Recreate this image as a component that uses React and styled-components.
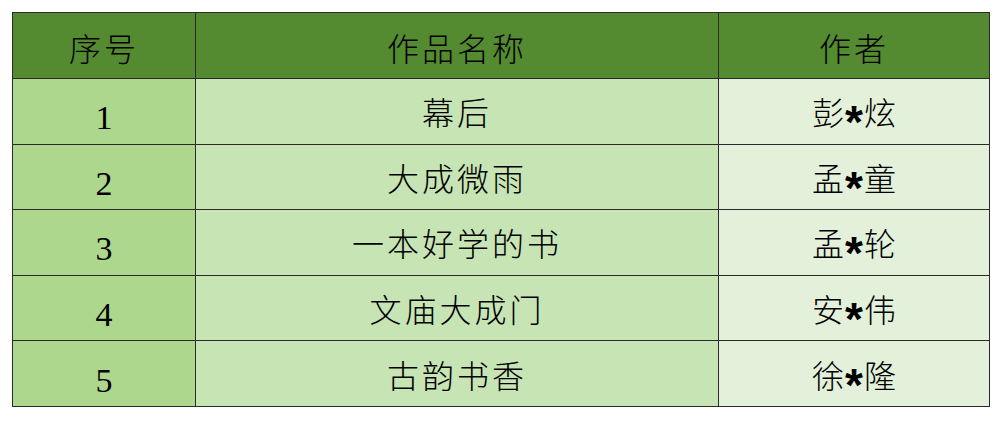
import React from "react";
import styled, { createGlobalStyle } from "styled-components";

const GlobalStyle = createGlobalStyle`
  html, body {
    margin: 0;
    padding: 0;
    background: #ffffff;
  }
  body {
    font-family: "Liberation Serif", "Noto Sans CJK SC", serif;
  }
`;

const Page = styled.div`
  padding: 12px 0 0 12px;
`;

const Table = styled.table`
  border-collapse: collapse;
  table-layout: fixed;
  width: 977px;
  border: 1px solid #2a2a2a;
  font-family: "Liberation Serif", "Noto Sans CJK SC", serif;
  font-size: 32px;
  font-weight: 300;
  color: #000;
`;

const tones = {
  head: "#548b30",
  index: "#aed78e",
  title: "#c7e4b4",
  author: "#e3f0da",
};

const HeadCell = styled.th`
  box-sizing: border-box;
  height: 66px;
  padding: 8px 0 0;
  background: ${tones.head};
  border: 1px solid #2a2a2a;
  font-weight: 300;
  line-height: 1;
  letter-spacing: 3px;
  text-align: center;
  vertical-align: middle;
`;

const Cell = styled.td`
  box-sizing: border-box;
  height: 65.6px;
  padding: ${(p) => (p.$tone === "index" ? "14px" : "6px")} 0 0;
  background: ${(p) => tones[p.$tone]};
  border: 1px solid #2a2a2a;
  font-size: ${(p) => (p.$tone === "index" ? "34px" : "32px")};
  line-height: 1;
  letter-spacing: ${(p) => (p.$tone === "title" ? "3px" : "0")};
  text-align: center;
  vertical-align: middle;
  white-space: nowrap;
`;

const Star = styled.span`
  margin: 0 1px;
  font-family: "Liberation Sans", "DejaVu Sans", sans-serif;
  font-weight: 700;
  font-size: 46px;
  line-height: 0;
  vertical-align: -0.28em;
`;

const works = [
  { id: 1, title: "幕后", author: ["彭", "炫"] },
  { id: 2, title: "大成微雨", author: ["孟", "童"] },
  { id: 3, title: "一本好学的书", author: ["孟", "轮"] },
  { id: 4, title: "文庙大成门", author: ["安", "伟"] },
  { id: 5, title: "古韵书香", author: ["徐", "隆"] },
];

export default function App() {
  return (
    <Page>
      <GlobalStyle />
      <Table>
        <colgroup>
          <col style={{ width: 183 }} />
          <col style={{ width: 523 }} />
          <col style={{ width: 271 }} />
        </colgroup>
        <thead>
          <tr>
            <HeadCell>序号</HeadCell>
            <HeadCell>作品名称</HeadCell>
            <HeadCell>作者</HeadCell>
          </tr>
        </thead>
        <tbody>
          {works.map((w) => (
            <tr key={w.id}>
              <Cell $tone="index">{w.id}</Cell>
              <Cell $tone="title">{w.title}</Cell>
              <Cell $tone="author">
                {w.author[0]}
                <Star>*</Star>
                {w.author[1]}
              </Cell>
            </tr>
          ))}
        </tbody>
      </Table>
    </Page>
  );
}
